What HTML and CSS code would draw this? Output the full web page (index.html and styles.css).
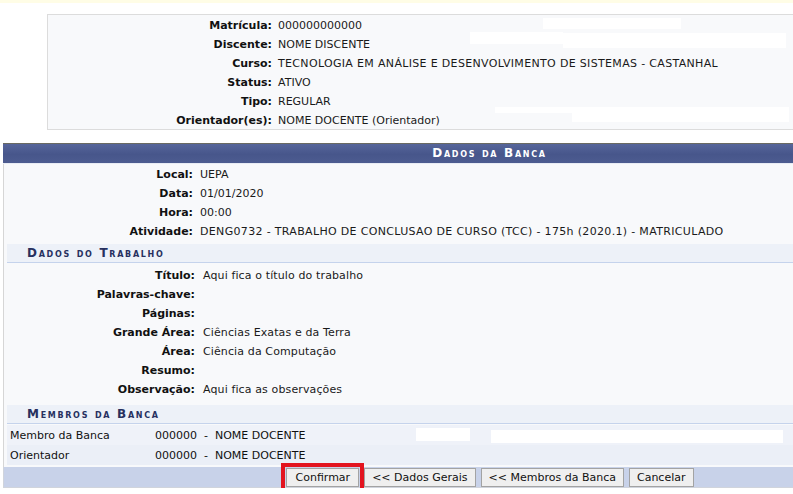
FILE: index.html
```html
<!DOCTYPE html>
<html lang="pt-BR">
<head>
<meta charset="utf-8">
<title>Dados da Banca</title>
<link rel="stylesheet" href="styles.css">
</head>
<body>
<div class="page">
  <div class="notice"></div>

  <div class="ident">
    <div class="kv"><span class="k">Matrícula:</span><span class="v">000000000000</span></div>
    <div class="kv"><span class="k">Discente:</span><span class="v">NOME DISCENTE</span></div>
    <div class="kv"><span class="k">Curso:</span><span class="v wide">TECNOLOGIA EM ANÁLISE E DESENVOLVIMENTO DE SISTEMAS - CASTANHAL</span></div>
    <div class="kv"><span class="k">Status:</span><span class="v">ATIVO</span></div>
    <div class="kv"><span class="k">Tipo:</span><span class="v">REGULAR</span></div>
    <div class="kv"><span class="k">Orientador(es):</span><span class="v">NOME DOCENTE (Orientador)</span></div>
  </div>

  <div class="banca">
    <div class="caption">Dados da Banca</div>
    <div class="body">
      <div class="kvs main">
        <div class="kv"><span class="k">Local:</span><span class="v">UEPA</span></div>
        <div class="kv"><span class="k">Data:</span><span class="v">01/01/2020</span></div>
        <div class="kv"><span class="k">Hora:</span><span class="v">00:00</span></div>
        <div class="kv"><span class="k">Atividade:</span><span class="v wide">DENG0732 - TRABALHO DE CONCLUSAO DE CURSO (TCC) - 175h (2020.1) - MATRICULADO</span></div>
      </div>

      <div class="sub">Dados do Trabalho</div>
      <div class="kvs trab">
        <div class="kv"><span class="k">Título:</span><span class="v text">Aqui fica o título do trabalho</span></div>
        <div class="kv"><span class="k">Palavras-chave:</span><span class="v"></span></div>
        <div class="kv"><span class="k">Páginas:</span><span class="v"></span></div>
        <div class="kv"><span class="k">Grande Área:</span><span class="v text">Ciências Exatas e da Terra</span></div>
        <div class="kv"><span class="k">Área:</span><span class="v text">Ciência da Computação</span></div>
        <div class="kv"><span class="k">Resumo:</span><span class="v"></span></div>
        <div class="kv"><span class="k">Observação:</span><span class="v text">Aqui fica as observações</span></div>
      </div>

      <div class="sub sub-members">Membros da Banca</div>
      <div class="members">
        <div class="mrow odd"><span class="role">Membro da Banca</span><span class="who">000000 &nbsp;- &nbsp;NOME DOCENTE</span></div>
        <div class="mrow even"><span class="role">Orientador</span><span class="who">000000 &nbsp;- &nbsp;NOME DOCENTE</span></div>
      </div>
    </div>
    <div class="footer">
      <button class="btn btn-primary" type="button">Confirmar</button>
      <button class="btn" type="button">&lt;&lt; Dados Gerais</button>
      <button class="btn" type="button">&lt;&lt; Membros da Banca</button>
      <button class="btn" type="button">Cancelar</button>
    </div>
  </div>

  <div class="mask m1"></div>
  <div class="mask m2"></div>
  <div class="mask m3"></div>
  <div class="mask m4"></div>
  <div class="mask m5"></div>
  <div class="mask m6"></div>
  <div class="mask m7"></div>
</div>
</body>
</html>
```

FILE: styles.css
```css
html, body {
  margin: 0;
  padding: 0;
  overflow: hidden;
  background: #ffffff;
}

body {
  font-family: "DejaVu Sans", Verdana, sans-serif;
  font-size: 11px;
  color: #111;
}

.page {
  position: relative;
  width: 973px;
  margin-left: 3px;
}

.notice {
  height: 3px;
  margin-left: -3px;
  width: 982px;
  background: #fffde6;
}

/* identification box */
.ident {
  margin: 11px 0 0 44px;
  width: 882px;
  border: 1px solid #dcdcdc;
  background: #f8f9fb;
}

.kv {
  display: grid;
  box-sizing: border-box;
  height: 19px;
  padding-top: 2px;
  line-height: 17px;
}

.ident .kv {
  grid-template-columns: 227px 1fr;
}

.k {
  text-align: right;
  font-weight: bold;
  color: #111;
  padding-right: 3px;
  white-space: nowrap;
}

.v {
  padding-left: 3px;
  color: #1a1a1a;
  white-space: nowrap;
}

.v.wide {
  letter-spacing: 0.33px;
}

.v.text {
  letter-spacing: 0.12px;
}

/* main table */
.banca {
  margin-top: 13px;
  width: 973px;
}

.caption {
  height: 19px;
  line-height: 19px;
  border-top: 1px solid #6a6a62;
  border-bottom: 1px solid #e8ecf4;
  background: linear-gradient(#56659a 0%, #47568b 55%, #4d5c90 100%);
  color: #ffffff;
  font-weight: bold;
  font-variant: small-caps;
  letter-spacing: 1.7px;
  text-align: center;
  font-size: 12px;
}

.body {
  background: #f8f9fb;
  border-left: 1px solid #d6d6d6;
  border-right: 1px solid #d6d6d6;
  padding: 0 2px 2px 2px;
}

.main .kv {
  grid-template-columns: 190px 1fr;
}

.main .v {
  padding-left: 4px;
}

.sub {
  margin: 4px 0 0 1px;
  height: 18px;
  line-height: 19px;
  background: #edf1f8;
  border-bottom: 1px solid #c5d3ec;
  color: #27305f;
  font-weight: bold;
  font-variant: small-caps;
  letter-spacing: 1.7px;
  font-size: 12px;
  padding-left: 20px;
}

.trab {
  margin-top: 2px;
}

.trab .kv {
  grid-template-columns: 192px 1fr;
}

.trab .v {
  padding-left: 5px;
}

.sub-members {
  margin-top: 7px;
}

.members {
  margin-left: 1px;
  margin-top: 1px;
}

.mrow {
  display: grid;
  grid-template-columns: 148px 1fr;
  height: 20px;
  align-items: center;
  background: #eff2f9;
}

.mrow.even {
  background: #ebeff7;
}

.role {
  padding-left: 3px;
}

.footer {
  height: 20px;
  background: #c8d2e9;
  border: 1px solid #d0d4dc;
  border-top: 0;
  display: flex;
  justify-content: center;
  align-items: center;
  gap: 5px;
}

.btn {
  font-family: "DejaVu Sans", Verdana, sans-serif;
  font-size: 11px;
  color: #111;
  background: #efefef;
  border: 1px solid #a3a3a3;
  height: 19px;
  padding: 0 7px;
  margin: 0;
  line-height: 15px;
}

.btn-primary {
  padding: 0 8px 0 9px;
  outline: 4px solid #e3141f;
  outline-offset: 1px;
}

/* redaction patches */
.mask {
  position: absolute;
  background: #ffffff;
}
.m1 { left: 540px; top: 18px;  width: 138px; height: 11px; }
.m2 { left: 467px; top: 32px;  width: 93px;  height: 12px; }
.m3 { left: 560px; top: 33px;  width: 223px; height: 15px; }
.m4 { left: 492px; top: 107px; width: 294px; height: 6px; }
.m5 { left: 569px; top: 107px; width: 217px; height: 15px; }
.m6 { left: 413px; top: 428px; width: 54px;  height: 13px; }
.m7 { left: 488px; top: 430px; width: 292px; height: 13px; }
```
